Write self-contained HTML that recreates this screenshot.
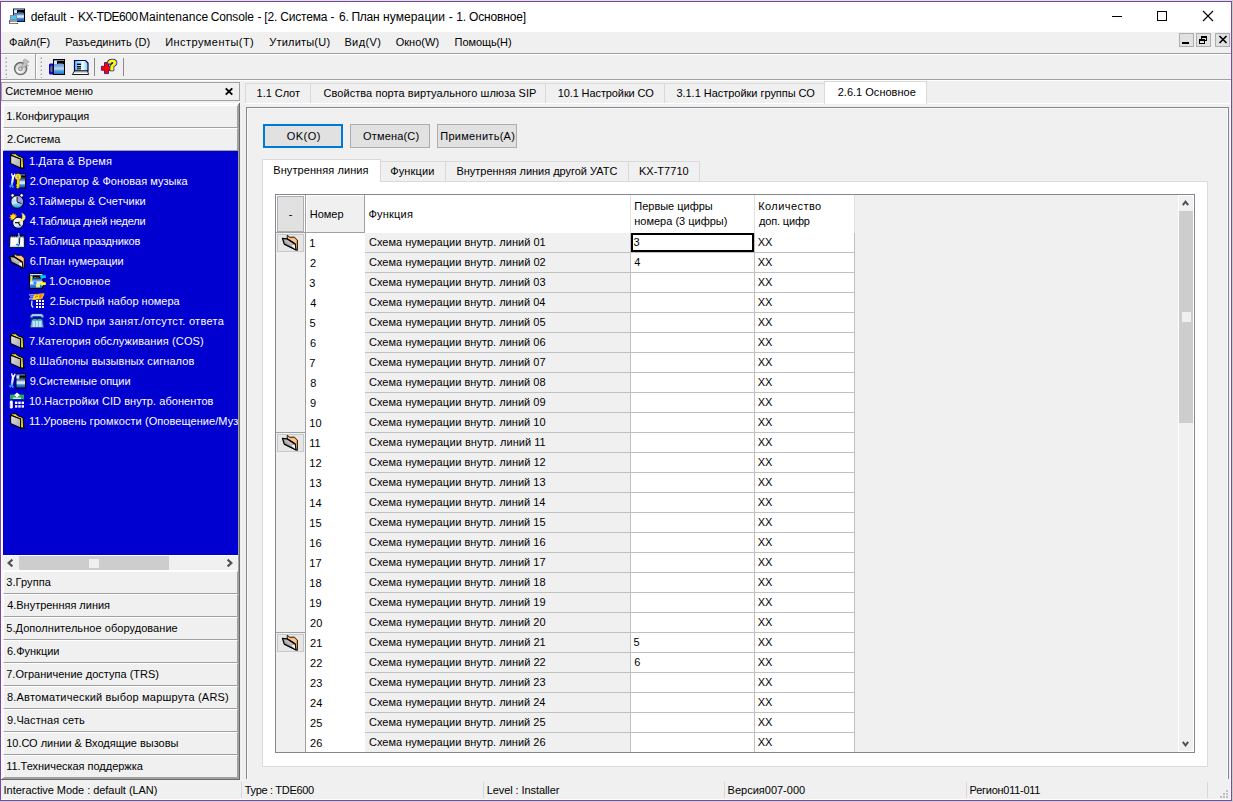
<!DOCTYPE html>
<html lang="ru"><head><meta charset="utf-8"><title>KX-TDE600 Maintenance Console</title>
<style>
html,body{margin:0;padding:0}
body{width:1233px;height:802px;overflow:hidden;background:#d5d8d4;position:relative;font-family:"Liberation Sans", Arial, sans-serif;font-size:11px;line-height:14px;color:#000}
div,span.t,svg{position:absolute;box-sizing:border-box}
span.t{white-space:pre}
svg{overflow:visible}
</style></head>
<body>
<svg width="0" height="0" style="left:0;top:0"><defs><linearGradient id="pbxg" x1="0" y1="0" x2="0" y2="1"><stop offset="0" stop-color="#3a7cc8"/><stop offset="0.42" stop-color="#3a7cc8"/><stop offset="0.56" stop-color="#d4dcfa"/><stop offset="0.68" stop-color="#e6ebff"/><stop offset="0.8" stop-color="#3a8ad8"/><stop offset="1" stop-color="#1560a8"/></linearGradient><linearGradient id="pbxg2" x1="0" y1="0" x2="0" y2="1"><stop offset="0" stop-color="#6098d8"/><stop offset="0.4" stop-color="#7aa8dc"/><stop offset="0.62" stop-color="#c4d6f0"/><stop offset="0.8" stop-color="#4a98e0"/><stop offset="1" stop-color="#2078c8"/></linearGradient><linearGradient id="wrg" x1="0" y1="0" x2="0" y2="1"><stop offset="0" stop-color="#ffffff"/><stop offset="0.6" stop-color="#d8ecff"/><stop offset="1" stop-color="#40a8f0"/></linearGradient><linearGradient id="clk2" x1="0" y1="0" x2="0.3" y2="1"><stop offset="0" stop-color="#ffffff"/><stop offset="0.7" stop-color="#e4f0ff"/><stop offset="1" stop-color="#a8ccf4"/></linearGradient><radialGradient id="discg" cx="0.4" cy="0.7" r="0.7"><stop offset="0" stop-color="#ffffff"/><stop offset="1" stop-color="#c4c4c4"/></radialGradient><linearGradient id="scrg" x1="0" y1="0" x2="1" y2="0"><stop offset="0" stop-color="#48bcf0"/><stop offset="0.62" stop-color="#f0faff"/><stop offset="1" stop-color="#78ccf4"/></linearGradient><linearGradient id="fold" x1="0" y1="0" x2="1" y2="1"><stop offset="0" stop-color="#e4e4e4"/><stop offset="1" stop-color="#a8a8a8"/></linearGradient><linearGradient id="clk" x1="0" y1="0" x2="0" y2="1"><stop offset="0" stop-color="#ffffff"/><stop offset="0.55" stop-color="#a8d8f8"/><stop offset="1" stop-color="#18a0e0"/></linearGradient></defs></svg>
<div style="left:0px;top:1px;width:1232px;height:800px;background:#f0f0f0;border:1px solid #7a46a8"></div>
<div style="left:1px;top:2px;width:1230px;height:30px;background:#fff"></div>
<svg style="left:9px;top:8px" width="17" height="16" viewBox="0 0 17 16" shape-rendering="crispEdges"><rect x="4" y="0" width="12" height="14" fill="#101840"/><rect x="5" y="1" width="10" height="12" fill="url(#pbxg)"/><rect x="5" y="1" width="10" height="1" fill="#6a8cc0"/><rect x="5" y="2" width="3" height="3" fill="#e0e4f8"/><rect x="8" y="2" width="7" height="3" fill="#000"/><rect x="9" y="4" width="3" height="1" fill="#207838"/><rect x="12" y="4" width="2" height="1" fill="#901828"/><rect x="15" y="0" width="1" height="14" fill="#000"/><rect x="4" y="0" width="12" height="1" fill="#8a8a90"/><rect x="1" y="7" width="7" height="5" fill="#8c8c8c"/><rect x="2" y="8" width="5" height="3" fill="#40c8ff"/><rect x="1" y="12" width="7" height="2" fill="#9a9a9a"/><rect x="0" y="14" width="9" height="1" fill="#f4f4f4"/><rect x="0" y="15" width="9" height="1" fill="#808080"/><rect x="0" y="12" width="1" height="3" fill="#5050c0"/><rect x="8" y="15" width="1" height="1" fill="#3030b0"/></svg>
<span id="t0" class="t" style="left:30.64px;top:9px;font-size:12px;line-height:16px;letter-spacing:-0.050px;">default</span>
<span id="t1" class="t" style="left:70.02px;top:9px;font-size:12px;line-height:16px;">-</span>
<span id="t2" class="t" style="left:77.97px;top:9px;font-size:12px;line-height:16px;letter-spacing:-0.481px;">KX-TDE600</span>
<span id="t3" class="t" style="left:139.04px;top:9px;font-size:12px;line-height:16px;letter-spacing:0.036px;">Maintenance</span>
<span id="t4" class="t" style="left:210.86px;top:9px;font-size:12px;line-height:16px;letter-spacing:-0.168px;">Console</span>
<span id="t5" class="t" style="left:257.42px;top:9px;font-size:12px;line-height:16px;">-</span>
<span id="t6" class="t" style="left:264.3px;top:9px;font-size:12px;line-height:16px;letter-spacing:-0.179px;">[2. Система</span>
<span id="t7" class="t" style="left:330.62px;top:9px;font-size:12px;line-height:16px;">-</span>
<span id="t8" class="t" style="left:339px;top:9px;font-size:12px;line-height:16px;letter-spacing:-0.290px;">6. План</span>
<span id="t9" class="t" style="left:382.9px;top:9px;font-size:12px;line-height:16px;letter-spacing:0.125px;">нумерации</span>
<span id="t10" class="t" style="left:448.72px;top:9px;font-size:12px;line-height:16px;">-</span>
<span id="t11" class="t" style="left:456.2px;top:9px;font-size:12px;line-height:16px;letter-spacing:-0.166px;">1. Основное]</span>
<div style="left:1112px;top:16px;width:10px;height:1px;background:#000"></div>
<div style="left:1157px;top:11px;width:10px;height:10px;border:1px solid #000"></div>
<svg style="left:1203px;top:11px" width="10" height="10" viewBox="0 0 10 10"><path d="M0 0 L10 10 M10 0 L0 10" stroke="#000" stroke-width="1.1" fill="none"/></svg>
<span id="t12" class="t" style="left:9.12px;top:35px;">Файл(F)</span>
<span id="t13" class="t" style="left:65.2px;top:35px;letter-spacing:0.037px;">Разъединить (D)</span>
<span id="t14" class="t" style="left:165.19px;top:35px;letter-spacing:0.454px;">Инструменты(T)</span>
<span id="t15" class="t" style="left:269.21px;top:35px;letter-spacing:0.211px;">Утилиты(U)</span>
<span id="t16" class="t" style="left:344.4px;top:35px;letter-spacing:0.378px;">Вид(V)</span>
<span id="t17" class="t" style="left:395.73px;top:35px;letter-spacing:0.015px;">Окно(W)</span>
<span id="t18" class="t" style="left:454.6px;top:35px;letter-spacing:-0.089px;">Помощь(H)</span>
<div style="left:1179px;top:33px;width:15px;height:14px;background:#e1e1e1;border:1px solid #adadad"></div>
<div style="left:1196px;top:33px;width:15px;height:14px;background:#e1e1e1;border:1px solid #adadad"></div>
<div style="left:1215px;top:33px;width:15px;height:14px;background:#e1e1e1;border:1px solid #adadad"></div>
<div style="left:1182px;top:42px;width:7px;height:2px;background:#000"></div>
<div style="left:1201px;top:36px;width:6px;height:5px;border:1px solid #000;border-top-width:2px"></div>
<div style="left:1199px;top:39px;width:6px;height:5px;border:1px solid #000;border-top-width:2px;background:#e1e1e1"></div>
<svg style="left:1219px;top:36px" width="8" height="7" viewBox="0 0 8 7"><path d="M0.5 0 L7.5 7 M7.5 0 L0.5 7" stroke="#000" stroke-width="1.6" fill="none"/></svg>
<div style="left:1px;top:53px;width:1230px;height:1px;background:#a0a0a0"></div>
<div style="left:1px;top:54px;width:1230px;height:1px;background:#fff"></div>
<div style="left:35px;top:54px;width:1px;height:26px;background:#a0a0a0"></div>
<div style="left:36px;top:55px;width:1px;height:24px;background:#fff"></div>
<div style="left:5px;top:57px;width:2px;height:2px;background:linear-gradient(135deg,#e8e8e8 35%,#a8a8a8 65%)"></div>
<div style="left:5px;top:61px;width:2px;height:2px;background:linear-gradient(135deg,#e8e8e8 35%,#a8a8a8 65%)"></div>
<div style="left:5px;top:65px;width:2px;height:2px;background:linear-gradient(135deg,#e8e8e8 35%,#a8a8a8 65%)"></div>
<div style="left:5px;top:69px;width:2px;height:2px;background:linear-gradient(135deg,#e8e8e8 35%,#a8a8a8 65%)"></div>
<div style="left:5px;top:73px;width:2px;height:2px;background:linear-gradient(135deg,#e8e8e8 35%,#a8a8a8 65%)"></div>
<div style="left:5px;top:77px;width:2px;height:1px;background:linear-gradient(135deg,#e8e8e8 35%,#a8a8a8 65%)"></div>
<div style="left:40px;top:57px;width:2px;height:2px;background:linear-gradient(135deg,#e8e8e8 35%,#a8a8a8 65%)"></div>
<div style="left:40px;top:61px;width:2px;height:2px;background:linear-gradient(135deg,#e8e8e8 35%,#a8a8a8 65%)"></div>
<div style="left:40px;top:65px;width:2px;height:2px;background:linear-gradient(135deg,#e8e8e8 35%,#a8a8a8 65%)"></div>
<div style="left:40px;top:69px;width:2px;height:2px;background:linear-gradient(135deg,#e8e8e8 35%,#a8a8a8 65%)"></div>
<div style="left:40px;top:73px;width:2px;height:2px;background:linear-gradient(135deg,#e8e8e8 35%,#a8a8a8 65%)"></div>
<div style="left:40px;top:77px;width:2px;height:1px;background:linear-gradient(135deg,#e8e8e8 35%,#a8a8a8 65%)"></div>
<svg style="left:14px;top:59px" width="16" height="17" viewBox="0 0 16 17"><circle cx="6.6" cy="9.6" r="6" fill="url(#discg)" stroke="#6c6c6c" stroke-width="1.5"/><circle cx="6.4" cy="9.8" r="1.9" fill="#d0d0d0" stroke="#7a7a7a" stroke-width="0.9"/><path d="M7 9 L10 3 L9 1.2 L11.5 0.2 L13 1.5 L15 2.6 L13.6 4 L12 5 L14.6 6.6 L12 6.8 L11 8 Z" fill="#c2c2c2" stroke="#8c8c8c" stroke-width="0.6"/></svg>
<svg style="left:49px;top:59px" width="17" height="16" viewBox="0 0 17 16"><rect x="0" y="4.5" width="5" height="11" rx="1.5" fill="#0000e0"/><ellipse cx="2.3" cy="10" rx="1.2" ry="3.6" fill="#7078a0" stroke="#303060" stroke-width="0.6"/><rect x="4" y="0" width="12" height="16" fill="#000"/><rect x="5" y="1" width="10" height="14" fill="url(#pbxg2)"/><rect x="5" y="1" width="10" height="1" fill="#6a8cc0"/><rect x="5" y="2" width="3" height="3" fill="#e0e4f8"/><rect x="8" y="2" width="7" height="3" fill="#000"/><rect x="9" y="4" width="3" height="1" fill="#207838"/><rect x="12" y="4" width="2" height="1" fill="#901828"/></svg>
<svg style="left:72px;top:59px" width="17" height="16" viewBox="0 0 17 16"><path d="M2.5 1.5 L13.5 1.5 L16 4 L16 12 L2.5 12 Z" fill="url(#scrg)" stroke="#000060" stroke-width="1.2"/><rect x="5" y="4.6" width="4" height="1.4" fill="#000"/><rect x="5" y="7" width="4" height="1.4" fill="#000"/><rect x="5" y="9.2" width="4" height="1.2" fill="#102030"/><path d="M2.5 12 L15.5 12 L16.6 15.5 L0.4 15.5 Z" fill="#fff" stroke="#000" stroke-width="0.9"/><rect x="3" y="12" width="12" height="1.4" fill="#909090"/></svg>
<div style="left:94px;top:58px;width:1px;height:18px;background:#8a8a8a"></div>
<svg style="left:101px;top:59px" width="17" height="16" viewBox="0 0 17 16"><path d="M3.5 3.5 L7.5 3.5 L7.5 7.3 L9.6 7.3 L9.6 11.3 L7.5 11.3 L7.5 14.6 L3.5 14.6 L3.5 11.3 L0.4 11.3 L0.4 7.3 L3.5 7.3 Z" fill="#ff0000" stroke="#000080" stroke-width="0.7"/><text x="6.6" y="11" font-family="Liberation Sans, Arial, sans-serif" font-weight="bold" font-size="15" fill="#000080" stroke="#000080" stroke-width="2.6" stroke-linejoin="round">?</text><text x="6.6" y="11" font-family="Liberation Sans, Arial, sans-serif" font-weight="bold" font-size="15" fill="#ffff00" stroke="#ffff00" stroke-width="0.9">?</text></svg>
<div style="left:123px;top:58px;width:1px;height:18px;background:#8a8a8a"></div>
<div style="left:1px;top:79px;width:1230px;height:1px;background:#a0a0a0"></div>
<div style="left:1px;top:80px;width:1230px;height:1px;background:#fff"></div>
<div style="left:1px;top:82px;width:239px;height:19px;border:1px solid #a0a0a0"></div>
<span id="t19" class="t" style="left:5.2px;top:84px;letter-spacing:0.029px;">Системное меню</span>
<svg style="left:225px;top:88px" width="8" height="7" viewBox="0 0 8 7"><path d="M0.7 0.4 L7.3 6.6 M7.3 0.4 L0.7 6.6" stroke="#000" stroke-width="1.9" fill="none"/></svg>
<div style="left:238px;top:104px;width:1px;height:675px;background:#a0a0a0"></div>
<div style="left:239px;top:103px;width:1px;height:677px;background:#696969"></div>
<div style="left:2px;top:778px;width:237px;height:1px;background:#a0a0a0"></div>
<div style="left:1px;top:779px;width:239px;height:1px;background:#696969"></div>
<div style="left:1px;top:103px;width:237px;height:1px;background:#fff"></div>
<div style="left:2px;top:104px;width:236px;height:1px;background:#f6f6f6"></div>
<div style="left:1px;top:103px;width:1px;height:676px;background:#fff"></div>
<div style="left:2px;top:104px;width:1px;height:674px;background:#f6f6f6"></div>
<div style="left:3px;top:105px;width:235px;height:23px;background:#f0f0f0;border-top:1px solid #fff;border-left:1px solid #fff;border-bottom:1px solid #a0a0a0;border-right:1px solid #a0a0a0"></div>
<span id="t20" class="t" style="left:6.2px;top:109px;letter-spacing:0.008px;">1.Конфигурация</span>
<div style="left:3px;top:128px;width:235px;height:23px;background:#f0f0f0;border-top:1px solid #fff;border-left:1px solid #fff;border-bottom:1px solid #a0a0a0;border-right:1px solid #a0a0a0"></div>
<span id="t21" class="t" style="left:7.02px;top:132px;">2.Система</span>
<div style="left:3px;top:151px;width:235px;height:404px;background:#0000d0"></div>
<div style="left:3px;top:151px;width:235px;height:404px;overflow:hidden">
<svg style="left:7px;top:2px" width="15" height="16" viewBox="0 0 15 16"><path d="M2 0.8 L5.5 0.8 L7.5 2.6 L13 4.8 L13.6 15 L10.5 15 L10 6 L1 2 Z" fill="#f2e238" stroke="#000" stroke-width="1"/><path d="M0.6 2.2 L10.6 6 L10.6 15 L0.6 10.4 Z" fill="url(#fold)" stroke="#000" stroke-width="1.1"/><path d="M11 15.3 L14.5 15.3 L14.5 14.2" stroke="#000" stroke-width="1" fill="none"/></svg>
<span id="t22" class="t" style="left:25.9px;top:3px;color:#fff;letter-spacing:0.238px;">1.Дата &amp; Время</span>
<svg style="left:6px;top:22px" width="17" height="16" viewBox="0 0 17 16"><rect x="7" y="0.5" width="10" height="15" fill="#000"/><rect x="8" y="1.5" width="8" height="13" fill="url(#pbxg)"/><rect x="8" y="1.5" width="8" height="1" fill="#6a8cc0"/><rect x="8" y="2.5" width="3" height="3" fill="#e0e4f8"/><rect x="11" y="2.5" width="5" height="3" fill="#000"/><rect x="12" y="4.5" width="3" height="1" fill="#207838"/><rect x="15" y="4.5" width="2" height="1" fill="#901828"/><path d="M4.3 2.6 L2.7 12.4" stroke="url(#wrg)" stroke-width="2.3" fill="none"/><path d="M2.6 0.3 L3.1 2.8 L5.3 3 L6.1 0.7" stroke="#ffffff" stroke-width="1.3" fill="none"/><path d="M0.7 12.2 L1.5 14.6 M4.2 12.6 L3.6 15 M1 13 L4 13" stroke="#2ea0f0" stroke-width="1.3" fill="none"/><circle cx="9" cy="3.8" r="2" fill="none" stroke="#a08000" stroke-width="2.4"/><circle cx="9" cy="3.8" r="2" fill="none" stroke="#f8e428" stroke-width="1.6"/><path d="M8 6 L10.2 6 L10.2 14.4 L8.8 15.4 L7 14.4 L8 13.4 L7 12.2 L8 11 Z" fill="#f8e428" stroke="#a08000" stroke-width="0.5"/></svg>
<span id="t23" class="t" style="left:26.72px;top:23px;color:#fff;letter-spacing:0.028px;">2.Оператор &amp; Фоновая музыка</span>
<svg style="left:7px;top:42px" width="15" height="16" viewBox="0 0 15 16"><circle cx="2.6" cy="2.4" r="1.7" fill="#fff" stroke="#000" stroke-width="0.6"/><circle cx="11.6" cy="2.4" r="1.7" fill="#fff" stroke="#000" stroke-width="0.6"/><circle cx="7.1" cy="9" r="6.3" fill="url(#clk)" stroke="#000" stroke-width="1"/><path d="M7.1 9 L7.1 3.2 A5.8 5.8 0 0 1 12.6 11 Z" fill="#9c9ce0"/><path d="M7.1 3.6 L7.1 9 L11.6 10.6" stroke="#000" stroke-width="0.9" fill="none"/><path d="M7.1 9 L2.2 10.8" stroke="#fff" stroke-width="0.8"/></svg>
<span id="t24" class="t" style="left:25.92px;top:43px;color:#fff;letter-spacing:0.042px;">3.Таймеры &amp; Счетчики</span>
<svg style="left:6px;top:62px" width="16" height="16" viewBox="0 0 16 16"><path d="M4.2 -0.2 L5 1.6 L6.8 0.6 L6.6 2.4 L8.4 2.6 L7 4 L4 8.2 L3.2 6.4 L1.2 7.4 L1.8 5.4 L0 4.6 L1.6 3.6 L0.6 1.8 L2.6 2 Z" fill="#ff8a10"/><circle cx="4.3" cy="4" r="2.3" fill="#ffe818"/><circle cx="9.2" cy="9.8" r="5.5" fill="url(#clk2)" stroke="#000" stroke-width="1"/><path d="M6 9.6 L9.4 9.8 L11.4 13 M9.4 9.8 L10.6 8.6" stroke="#000" stroke-width="1.1" fill="none"/><path d="M12.8 0.2 C18 2 17.4 8.4 10.2 8.8 C13.4 6.6 14.4 3.6 12.8 0.2 Z" fill="#fff078" stroke="#f4dc40" stroke-width="0.6"/></svg>
<span id="t25" class="t" style="left:26.87px;top:63px;color:#fff;letter-spacing:-0.208px;">4.Таблица дней недели</span>
<svg style="left:6px;top:82px" width="16" height="16" viewBox="0 0 16 16"><path d="M1 3 L2 2.2 L3 3.4 L4 2.2 L5 3.4 L6 2.2 L7 3.4 L8 2.2 L9 3.4 L10.6 2.2 L12 3.4 L13.2 2.2 L15.2 3 L15.4 14.6 L0.6 14.6 Z" fill="#fff" stroke="#000" stroke-width="0.9"/><path d="M1.6 1.8 L2 4.4 M3.6 1.8 L4 4.4 M5.6 1.8 L6 4.4 M7.6 2 L8 4.4 M12 1.8 L12.2 4.4 M14 1.8 L14 4.4" stroke="#000" stroke-width="1.1"/><rect x="1.2" y="12.6" width="13.6" height="1.4" fill="#b8d8f4"/><path d="M9.6 0 L10 3.4 L9.6 10" stroke="#7ab8f0" stroke-width="1.4" fill="none"/><path d="M10.8 4.4 L10.4 11.6" stroke="#000" stroke-width="0.9"/><path d="M6.6 11.6 L8 10.4 L9.8 11 L10.4 12.8 L8.6 14 L9 12.6 L7.4 12.2 Z" fill="#2080e0"/></svg>
<span id="t26" class="t" style="left:25.98px;top:83px;color:#fff;letter-spacing:-0.120px;">5.Таблица праздников</span>
<svg style="left:6px;top:102px" width="16" height="16" viewBox="0 0 16 16"><path d="M5.2 0.4 L7.8 2.2 L12.4 2.2 L15.4 5.1 L15.4 15.4 L13.8 14.8 L13.2 8.6 L5.2 3.9 Z" fill="#ffaa55" stroke="#000" stroke-width="0.9" stroke-linejoin="round"/><path d="M6 1.8 L8 3.4 L11.8 3.4 L14 5.6 L14 9 L12 6.4 L6.4 3.4 Z" fill="#ffc890"/><path d="M0.5 3.4 L5.2 3.9 L13.2 9.1 L13.8 14.8 L2.3 9.1 Z" fill="#a9a9a9" stroke="#000" stroke-width="1.3" stroke-linejoin="round"/><path d="M2.4 5 L6 5.4 L11 9 L8 9.6 Z" fill="#c4c4c4"/><path d="M9.4 10.4 L12.8 9.6 L13.2 14 Z" fill="#fff"/></svg>
<span id="t27" class="t" style="left:26.71px;top:103px;color:#fff;letter-spacing:-0.044px;">6.План нумерации</span>
<svg style="left:26px;top:122px" width="17" height="16" viewBox="0 0 17 16"><rect x="0" y="0" width="14" height="16" fill="#000"/><rect x="1" y="1" width="12" height="14" fill="url(#pbxg)"/><rect x="1" y="1" width="12" height="1" fill="#dfe8ff"/><rect x="4" y="2.5" width="8" height="3" fill="#000"/><rect x="5" y="4" width="2.4" height="1" fill="#2a9a3a"/><rect x="8" y="4" width="2" height="1" fill="#b01020"/><rect x="1.5" y="3" width="1.6" height="6" fill="#f8e820"/><rect x="4.5" y="8.5" width="3" height="3" fill="#2090ff"/><rect x="7" y="11" width="4" height="3.4" fill="#e8f080"/><path d="M10.6 3.6 L13.8 0.6 L13.8 2.2 L16.8 2.2 L16.8 5 L13.8 5 L13.8 6.6 Z" fill="#00c8f0"/><path d="M10.6 10.6 L13.8 7.6 L13.8 9.2 L16.8 9.2 L16.8 12 L13.8 12 L13.8 13.6 Z" fill="#ffff00"/></svg>
<span id="t28" class="t" style="left:45.9px;top:123px;color:#fff;letter-spacing:0.200px;">1.Основное</span>
<svg style="left:26px;top:142px" width="16" height="16" viewBox="0 0 16 16"><path d="M5.5 1 L15.5 0.4 L13 6 L3.4 7 Z" fill="#ffd820"/><path d="M11 0.8 L15.5 0.4 L13 6 L10 6.2 Z" fill="#ffa010"/><path d="M6.5 2 L9.5 1.6 M6 4 L9 3.6 M10.4 2.2 L12.4 2 M10 4 L12 3.8" stroke="#a07000" stroke-width="0.8"/><rect x="0" y="1.4" width="5" height="1" fill="#e8eeff"/><rect x="1" y="3.4" width="4" height="1" fill="#c8d8ff"/><rect x="0" y="5.4" width="4" height="1" fill="#e8eeff"/><path d="M3 7.6 L2.6 12 L4 14.6" stroke="#d8ecff" stroke-width="1.3" fill="none"/><rect x="7" y="7" width="2" height="2" fill="#fff"/><rect x="10" y="7" width="2" height="2" fill="#fff"/><rect x="13" y="7" width="2" height="2" fill="#fff"/><rect x="7" y="10" width="2" height="2" fill="#fff"/><rect x="10" y="10" width="2" height="2" fill="#fff"/><rect x="13" y="10" width="2" height="2" fill="#fff"/><rect x="7" y="13" width="2" height="2" fill="#fff"/><rect x="10" y="13" width="2" height="2" fill="#fff"/><rect x="13" y="13" width="2" height="2" fill="#fff"/></svg>
<span id="t29" class="t" style="left:46.72px;top:143px;color:#fff;">2.Быстрый набор номера</span>
<svg style="left:26px;top:162px" width="16" height="16" viewBox="0 0 16 16"><path d="M1 4.4 Q1 1 4 1 L12 1 Q15 1 15 4.4 L12.6 5 L12 3.4 L4 3.4 L3.4 5 Z" fill="#80c0ff" stroke="#204880" stroke-width="0.8"/><path d="M3 2 L13 2" stroke="#e8f4ff" stroke-width="1"/><path d="M2.6 6.4 L13.4 6.4 L14.6 14.6 L1.4 14.6 Z" fill="#70b0f0" stroke="#204880" stroke-width="0.8"/><rect x="4" y="6" width="3.4" height="1.6" fill="#20c848"/><rect x="8.6" y="6" width="3.4" height="1.6" fill="#20c848"/><rect x="3.6" y="8.4" width="2.4" height="1.3" fill="#f4f8ff"/><rect x="6.8" y="8.4" width="2.4" height="1.3" fill="#f4f8ff"/><rect x="10" y="8.4" width="2.4" height="1.3" fill="#f4f8ff"/><rect x="3.6" y="10.4" width="2.4" height="1.3" fill="#f4f8ff"/><rect x="6.8" y="10.4" width="2.4" height="1.3" fill="#f4f8ff"/><rect x="10" y="10.4" width="2.4" height="1.3" fill="#f4f8ff"/><rect x="3.6" y="12.4" width="2.4" height="1.3" fill="#f4f8ff"/><rect x="6.8" y="12.4" width="2.4" height="1.3" fill="#f4f8ff"/><rect x="10" y="12.4" width="2.4" height="1.3" fill="#f4f8ff"/></svg>
<span id="t30" class="t" style="left:45.92px;top:163px;color:#fff;letter-spacing:0.285px;">3.DND при занят./отсутст. ответа</span>
<svg style="left:7px;top:182px" width="15" height="16" viewBox="0 0 15 16"><path d="M2 0.8 L5.5 0.8 L7.5 2.6 L13 4.8 L13.6 15 L10.5 15 L10 6 L1 2 Z" fill="#f2e238" stroke="#000" stroke-width="1"/><path d="M0.6 2.2 L10.6 6 L10.6 15 L0.6 10.4 Z" fill="url(#fold)" stroke="#000" stroke-width="1.1"/><path d="M11 15.3 L14.5 15.3 L14.5 14.2" stroke="#000" stroke-width="1" fill="none"/></svg>
<span id="t31" class="t" style="left:25.92px;top:183px;color:#fff;letter-spacing:0.124px;">7.Категория обслуживания (COS)</span>
<svg style="left:7px;top:202px" width="15" height="16" viewBox="0 0 15 16"><path d="M2 0.8 L5.5 0.8 L7.5 2.6 L13 4.8 L13.6 15 L10.5 15 L10 6 L1 2 Z" fill="#f2e238" stroke="#000" stroke-width="1"/><path d="M0.6 2.2 L10.6 6 L10.6 15 L0.6 10.4 Z" fill="url(#fold)" stroke="#000" stroke-width="1.1"/><path d="M11 15.3 L14.5 15.3 L14.5 14.2" stroke="#000" stroke-width="1" fill="none"/></svg>
<span id="t32" class="t" style="left:26.73px;top:203px;color:#fff;letter-spacing:0.087px;">8.Шаблоны вызывных сигналов</span>
<svg style="left:6px;top:222px" width="17" height="16" viewBox="0 0 17 16"><rect x="6.5" y="0.5" width="10.5" height="15" fill="#000"/><rect x="7.5" y="1.5" width="8.5" height="13" fill="url(#pbxg)"/><rect x="7.5" y="1.5" width="8.5" height="1" fill="#6a8cc0"/><rect x="7.5" y="2.5" width="3" height="3" fill="#e0e4f8"/><rect x="10.5" y="2.5" width="5.5" height="3" fill="#000"/><rect x="11.5" y="4.5" width="3" height="1" fill="#207838"/><rect x="14.5" y="4.5" width="2" height="1" fill="#901828"/><path d="M4.3 2.6 L2.7 12.4" stroke="url(#wrg)" stroke-width="2.3" fill="none"/><path d="M2.6 0.3 L3.1 2.8 L5.3 3 L6.1 0.7" stroke="#ffffff" stroke-width="1.3" fill="none"/><path d="M0.7 12.2 L1.5 14.6 M4.2 12.6 L3.6 15 M1 13 L4 13" stroke="#2ea0f0" stroke-width="1.3" fill="none"/></svg>
<span id="t33" class="t" style="left:26.72px;top:223px;color:#fff;letter-spacing:-0.017px;">9.Системные опции</span>
<svg style="left:6px;top:242px" width="16" height="16" viewBox="0 0 16 16"><rect x="1" y="1.6" width="14" height="4.6" fill="#20b050"/><path d="M4.6 2.6 L8 -0.4 L11.4 2.6 L10 2.6 L8 4.8 L6 2.6 Z" fill="#fff"/><rect x="4" y="4.6" width="8" height="1.2" fill="#f0fff4"/><rect x="0.8" y="7.6" width="3" height="8" rx="1.4" fill="#fff"/><rect x="1.2" y="10" width="0.9" height="4" fill="#b8d0f0"/><rect x="6" y="8.6" width="2.4" height="2.4" fill="#fff"/><rect x="9.3" y="8.6" width="2.4" height="2.4" fill="#fff"/><rect x="12.6" y="8.6" width="2.4" height="2.4" fill="#fff"/><rect x="6" y="12.2" width="2.4" height="2.4" fill="#fff"/><rect x="9.3" y="12.2" width="2.4" height="2.4" fill="#fff"/><rect x="12.6" y="12.2" width="2.4" height="2.4" fill="#fff"/></svg>
<span id="t34" class="t" style="left:25.9px;top:243px;color:#fff;letter-spacing:0.058px;">10.Настройки CID внутр. абонентов</span>
<svg style="left:7px;top:262px" width="15" height="16" viewBox="0 0 15 16"><path d="M2 0.8 L5.5 0.8 L7.5 2.6 L13 4.8 L13.6 15 L10.5 15 L10 6 L1 2 Z" fill="#f2e238" stroke="#000" stroke-width="1"/><path d="M0.6 2.2 L10.6 6 L10.6 15 L0.6 10.4 Z" fill="url(#fold)" stroke="#000" stroke-width="1.1"/><path d="M11 15.3 L14.5 15.3 L14.5 14.2" stroke="#000" stroke-width="1" fill="none"/></svg>
<span id="t35" class="t" style="left:25.9px;top:263px;color:#fff;letter-spacing:0.072px;">11.Уровень громкости (Оповещение/Музыка)</span>
</div>
<div style="left:3px;top:555px;width:235px;height:16px;background:#f0f0f0"></div>
<div style="left:3px;top:555px;width:235px;height:1px;background:#fff"></div>
<div style="left:3px;top:570px;width:235px;height:1px;background:#fff"></div>
<div style="left:19px;top:556px;width:150px;height:14px;background:#cdcdcd"></div>
<div style="left:89px;top:559px;width:10px;height:9px;background:#f0f0f0"></div>
<svg style="left:7px;top:559px" width="6" height="8" viewBox="0 0 6 8"><path d="M5.4 0.6 L1.6 4 L5.4 7.4" stroke="#505050" stroke-width="2.1" fill="none"/></svg>
<svg style="left:227px;top:559px" width="6" height="8" viewBox="0 0 6 8"><path d="M0.6 0.6 L4.4 4 L0.6 7.4" stroke="#505050" stroke-width="2.1" fill="none"/></svg>
<div style="left:3px;top:571px;width:235px;height:23px;background:#f0f0f0;border-top:1px solid #fff;border-left:1px solid #fff;border-bottom:1px solid #a0a0a0;border-right:1px solid #a0a0a0"></div>
<span id="t36" class="t" style="left:6.22px;top:575px;letter-spacing:0.093px;">3.Группа</span>
<div style="left:3px;top:594px;width:235px;height:23px;background:#f0f0f0;border-top:1px solid #fff;border-left:1px solid #fff;border-bottom:1px solid #a0a0a0;border-right:1px solid #a0a0a0"></div>
<span id="t37" class="t" style="left:7.17px;top:598px;letter-spacing:-0.021px;">4.Внутренняя линия</span>
<div style="left:3px;top:617px;width:235px;height:23px;background:#f0f0f0;border-top:1px solid #fff;border-left:1px solid #fff;border-bottom:1px solid #a0a0a0;border-right:1px solid #a0a0a0"></div>
<span id="t38" class="t" style="left:6.28px;top:621px;letter-spacing:0.056px;">5.Дополнительное оборудование</span>
<div style="left:3px;top:640px;width:235px;height:23px;background:#f0f0f0;border-top:1px solid #fff;border-left:1px solid #fff;border-bottom:1px solid #a0a0a0;border-right:1px solid #a0a0a0"></div>
<span id="t39" class="t" style="left:7.01px;top:644px;">6.Функции</span>
<div style="left:3px;top:663px;width:235px;height:23px;background:#f0f0f0;border-top:1px solid #fff;border-left:1px solid #fff;border-bottom:1px solid #a0a0a0;border-right:1px solid #a0a0a0"></div>
<span id="t40" class="t" style="left:6.22px;top:667px;letter-spacing:0.007px;">7.Ограничение доступа (TRS)</span>
<div style="left:3px;top:686px;width:235px;height:23px;background:#f0f0f0;border-top:1px solid #fff;border-left:1px solid #fff;border-bottom:1px solid #a0a0a0;border-right:1px solid #a0a0a0"></div>
<span id="t41" class="t" style="left:7.03px;top:690px;letter-spacing:0.193px;">8.Автоматический выбор маршрута (ARS)</span>
<div style="left:3px;top:709px;width:235px;height:23px;background:#f0f0f0;border-top:1px solid #fff;border-left:1px solid #fff;border-bottom:1px solid #a0a0a0;border-right:1px solid #a0a0a0"></div>
<span id="t42" class="t" style="left:7.02px;top:713px;letter-spacing:0.111px;">9.Частная сеть</span>
<div style="left:3px;top:732px;width:235px;height:23px;background:#f0f0f0;border-top:1px solid #fff;border-left:1px solid #fff;border-bottom:1px solid #a0a0a0;border-right:1px solid #a0a0a0"></div>
<span id="t43" class="t" style="left:6.2px;top:736px;letter-spacing:-0.018px;">10.СО линии &amp; Входящие вызовы</span>
<div style="left:3px;top:755px;width:235px;height:23px;background:#f0f0f0;border-top:1px solid #fff;border-left:1px solid #fff;border-bottom:1px solid #a0a0a0;border-right:1px solid #a0a0a0"></div>
<span id="t44" class="t" style="left:6.2px;top:759px;letter-spacing:-0.023px;">11.Техническая поддержка</span>
<div style="left:245px;top:103px;width:986px;height:1px;background:#fff"></div>
<div style="left:245px;top:83px;width:66px;height:20px;border:1px solid #d9d9d9;border-bottom:none"></div>
<span id="t45" class="t" style="left:256.6px;top:86px;letter-spacing:-0.051px;">1.1 Слот</span>
<div style="left:310px;top:83px;width:236px;height:20px;border:1px solid #d9d9d9;border-bottom:none"></div>
<span id="t46" class="t" style="left:323.45px;top:86px;letter-spacing:0.066px;">Свойства порта виртуального шлюза SIP</span>
<div style="left:545px;top:83px;width:120px;height:20px;border:1px solid #d9d9d9;border-bottom:none"></div>
<span id="t47" class="t" style="left:557.65px;top:86px;letter-spacing:-0.099px;">10.1 Настройки СО</span>
<div style="left:664px;top:83px;width:161px;height:20px;border:1px solid #d9d9d9;border-bottom:none"></div>
<span id="t48" class="t" style="left:676.42px;top:86px;letter-spacing:-0.030px;">3.1.1 Настройки группы СО</span>
<div style="left:824px;top:81px;width:103px;height:23px;background:#fff;border:1px solid #d9d9d9;border-bottom:none"></div>
<span id="t49" class="t" style="left:837.72px;top:85px;letter-spacing:0.011px;">2.6.1 Основное</span>
<div style="left:246px;top:107px;width:983px;height:672px;border:1px solid #828790;border-bottom:none"></div>
<div style="left:247px;top:108px;width:981px;height:671px;border:1px solid #f9f9f9;border-bottom:none"></div>
<div style="left:263px;top:124px;width:80px;height:24px;background:#e1e1e1;border:2px solid #0078d7"></div>
<span id="t50" class="t" style="left:286.73px;top:128.5px;letter-spacing:0.465px;">OK(O)</span>
<div style="left:350px;top:124px;width:80px;height:24px;background:#e1e1e1;border:1px solid #adadad"></div>
<span id="t51" class="t" style="left:362.98px;top:128.5px;letter-spacing:0.170px;">Отмена(C)</span>
<div style="left:437px;top:124px;width:80px;height:24px;background:#e1e1e1;border:1px solid #adadad"></div>
<span id="t52" class="t" style="left:440.25px;top:128.5px;letter-spacing:0.284px;">Применить(A)</span>
<div style="left:262px;top:181px;width:946px;height:586px;background:#fff;border:1px solid #dcdcdc"></div>
<div style="left:380px;top:161px;width:66px;height:21px;border:1px solid #d9d9d9;"></div>
<span id="t53" class="t" style="left:390.22px;top:164px;letter-spacing:0.133px;">Функции</span>
<div style="left:445px;top:161px;width:184px;height:21px;border:1px solid #d9d9d9;"></div>
<span id="t54" class="t" style="left:456.5px;top:164px;letter-spacing:-0.024px;">Внутренняя линия другой УАТС</span>
<div style="left:628px;top:161px;width:72px;height:21px;border:1px solid #d9d9d9;"></div>
<span id="t55" class="t" style="left:638.99px;top:164px;letter-spacing:0.017px;">KX-T7710</span>
<div style="left:262px;top:159px;width:119px;height:23px;background:#fff;border:1px solid #d9d9d9;border-bottom:none"></div>
<span id="t56" class="t" style="left:273.3px;top:163px;letter-spacing:0.080px;">Внутренняя линия</span>
<div style="left:275px;top:194px;width:920px;height:559px;background:#f0f0f0;border:1px solid #828790"></div>
<div style="left:276px;top:195px;width:30px;height:38px;background:#fff"></div>
<div style="left:277px;top:196px;width:27px;height:36px;background:#e1e1e1;border:1px solid #adadad"></div>
<span id="t57" class="t" style="left:288.72px;top:207px;">-</span>
<div style="left:276px;top:232px;width:89px;height:1px;background:#a0a0a0"></div>
<div style="left:276px;top:233px;width:29px;height:519px;background:#f0f0f0"></div>
<div style="left:305px;top:195px;width:1px;height:557px;background:#a0a0a0"></div>
<div style="left:306px;top:195px;width:59px;height:38px;background:#fff"></div>
<div style="left:307px;top:196px;width:57px;height:36px;background:#f0f0f0"></div>
<div style="left:364px;top:195px;width:1px;height:38px;background:#a0a0a0"></div>
<div style="left:306px;top:232px;width:59px;height:1px;background:#a0a0a0"></div>
<span id="t58" class="t" style="left:309.8px;top:207px;letter-spacing:-0.035px;">Номер</span>
<div style="left:306px;top:233px;width:59px;height:519px;background:#fff"></div>
<div style="left:365px;top:195px;width:490px;height:38px;background:#fff"></div>
<span id="t59" class="t" style="left:368.42px;top:207px;letter-spacing:0.217px;">Функция</span>
<div style="left:630px;top:195px;width:1px;height:38px;background:#e0e0e0"></div>
<div style="left:754px;top:195px;width:1px;height:38px;background:#e0e0e0"></div>
<div style="left:854px;top:195px;width:1px;height:38px;background:#e0e0e0"></div>
<span id="t60" class="t" style="left:634.3px;top:199px;letter-spacing:-0.018px;">Первые цифры</span>
<span id="t61" class="t" style="left:634.26px;top:214px;">номера (3 цифры)</span>
<span id="t62" class="t" style="left:758.19px;top:199px;letter-spacing:0.440px;">Количество</span>
<span id="t63" class="t" style="left:759.07px;top:214px;letter-spacing:-0.176px;">доп. цифр</span>
<div style="left:365px;top:233px;width:266px;height:519px;background:#f0f0f0"></div>
<div style="left:631px;top:233px;width:224px;height:519px;background:#fff"></div>
<div style="left:630px;top:233px;width:1px;height:519px;background:#c0c0c0"></div>
<div style="left:754px;top:233px;width:1px;height:519px;background:#c0c0c0"></div>
<div style="left:854px;top:233px;width:1px;height:519px;background:#c0c0c0"></div>
<div style="left:365px;top:252px;width:490px;height:1px;background:#c0c0c0"></div>
<span id="t64" class="t" style="left:309.3px;top:236px;">1</span>
<span id="t65" class="t" style="left:369px;top:235px;letter-spacing:0.018px;">Схема нумерации внутр. линий 01</span>
<span id="t66" class="t" style="left:633.42px;top:235px;">3</span>
<span id="t67" class="t" style="left:757.71px;top:235px;">XX</span>
<div style="left:277px;top:234px;width:27px;height:18px;background:#e6e6e6;border:1px solid #c8c8c8"></div>
<svg style="left:282px;top:235px" width="16" height="16" viewBox="0 0 16 16"><path d="M5.2 0.4 L7.8 2.2 L12.4 2.2 L15.4 5.1 L15.4 15.4 L13.8 14.8 L13.2 8.6 L5.2 3.9 Z" fill="#ffaa55" stroke="#000" stroke-width="0.9" stroke-linejoin="round"/><path d="M6 1.8 L8 3.4 L11.8 3.4 L14 5.6 L14 9 L12 6.4 L6.4 3.4 Z" fill="#ffc890"/><path d="M0.5 3.4 L5.2 3.9 L13.2 9.1 L13.8 14.8 L2.3 9.1 Z" fill="#a9a9a9" stroke="#000" stroke-width="1.3" stroke-linejoin="round"/><path d="M2.4 5 L6 5.4 L11 9 L8 9.6 Z" fill="#c4c4c4"/><path d="M9.4 10.4 L12.8 9.6 L13.2 14 Z" fill="#fff"/></svg>
<div style="left:365px;top:272px;width:490px;height:1px;background:#c0c0c0"></div>
<span id="t68" class="t" style="left:310.12px;top:256px;">2</span>
<span id="t69" class="t" style="left:369px;top:255px;letter-spacing:0.018px;">Схема нумерации внутр. линий 02</span>
<span id="t70" class="t" style="left:634.37px;top:255px;">4</span>
<span id="t71" class="t" style="left:757.71px;top:255px;">XX</span>
<div style="left:365px;top:292px;width:490px;height:1px;background:#c0c0c0"></div>
<span id="t72" class="t" style="left:309.32px;top:276px;">3</span>
<span id="t73" class="t" style="left:369px;top:275px;letter-spacing:0.015px;">Схема нумерации внутр. линий 03</span>
<span id="t74" class="t" style="left:757.71px;top:275px;">XX</span>
<div style="left:365px;top:312px;width:490px;height:1px;background:#c0c0c0"></div>
<span id="t75" class="t" style="left:310.27px;top:296px;">4</span>
<span id="t76" class="t" style="left:369px;top:295px;letter-spacing:0.011px;">Схема нумерации внутр. линий 04</span>
<span id="t77" class="t" style="left:757.71px;top:295px;">XX</span>
<div style="left:365px;top:332px;width:490px;height:1px;background:#c0c0c0"></div>
<span id="t78" class="t" style="left:309.38px;top:316px;">5</span>
<span id="t79" class="t" style="left:369px;top:315px;letter-spacing:0.015px;">Схема нумерации внутр. линий 05</span>
<span id="t80" class="t" style="left:757.71px;top:315px;">XX</span>
<div style="left:365px;top:352px;width:490px;height:1px;background:#c0c0c0"></div>
<span id="t81" class="t" style="left:310.11px;top:336px;">6</span>
<span id="t82" class="t" style="left:369px;top:335px;letter-spacing:0.015px;">Схема нумерации внутр. линий 06</span>
<span id="t83" class="t" style="left:757.71px;top:335px;">XX</span>
<div style="left:365px;top:372px;width:490px;height:1px;background:#c0c0c0"></div>
<span id="t84" class="t" style="left:309.32px;top:356px;">7</span>
<span id="t85" class="t" style="left:369px;top:355px;letter-spacing:0.015px;">Схема нумерации внутр. линий 07</span>
<span id="t86" class="t" style="left:757.71px;top:355px;">XX</span>
<div style="left:365px;top:392px;width:490px;height:1px;background:#c0c0c0"></div>
<span id="t87" class="t" style="left:310.13px;top:376px;">8</span>
<span id="t88" class="t" style="left:369px;top:375px;letter-spacing:0.015px;">Схема нумерации внутр. линий 08</span>
<span id="t89" class="t" style="left:757.71px;top:375px;">XX</span>
<div style="left:365px;top:412px;width:490px;height:1px;background:#c0c0c0"></div>
<span id="t90" class="t" style="left:310.12px;top:396px;">9</span>
<span id="t91" class="t" style="left:369px;top:395px;letter-spacing:0.015px;">Схема нумерации внутр. линий 09</span>
<span id="t92" class="t" style="left:757.71px;top:395px;">XX</span>
<div style="left:365px;top:432px;width:490px;height:1px;background:#c0c0c0"></div>
<span id="t93" class="t" style="left:309.3px;top:416px;">10</span>
<span id="t94" class="t" style="left:369px;top:415px;letter-spacing:0.015px;">Схема нумерации внутр. линий 10</span>
<span id="t95" class="t" style="left:757.71px;top:415px;">XX</span>
<div style="left:365px;top:452px;width:490px;height:1px;background:#c0c0c0"></div>
<span id="t96" class="t" style="left:309.3px;top:436px;">11</span>
<span id="t97" class="t" style="left:369px;top:435px;letter-spacing:0.048px;">Схема нумерации внутр. линий 11</span>
<span id="t98" class="t" style="left:757.71px;top:435px;">XX</span>
<div style="left:277px;top:434px;width:27px;height:18px;background:#e6e6e6;border:1px solid #c8c8c8"></div>
<svg style="left:282px;top:435px" width="16" height="16" viewBox="0 0 16 16"><path d="M5.2 0.4 L7.8 2.2 L12.4 2.2 L15.4 5.1 L15.4 15.4 L13.8 14.8 L13.2 8.6 L5.2 3.9 Z" fill="#ffaa55" stroke="#000" stroke-width="0.9" stroke-linejoin="round"/><path d="M6 1.8 L8 3.4 L11.8 3.4 L14 5.6 L14 9 L12 6.4 L6.4 3.4 Z" fill="#ffc890"/><path d="M0.5 3.4 L5.2 3.9 L13.2 9.1 L13.8 14.8 L2.3 9.1 Z" fill="#a9a9a9" stroke="#000" stroke-width="1.3" stroke-linejoin="round"/><path d="M2.4 5 L6 5.4 L11 9 L8 9.6 Z" fill="#c4c4c4"/><path d="M9.4 10.4 L12.8 9.6 L13.2 14 Z" fill="#fff"/></svg>
<div style="left:365px;top:472px;width:490px;height:1px;background:#c0c0c0"></div>
<span id="t99" class="t" style="left:309.3px;top:456px;">12</span>
<span id="t100" class="t" style="left:369px;top:455px;letter-spacing:0.018px;">Схема нумерации внутр. линий 12</span>
<span id="t101" class="t" style="left:757.71px;top:455px;">XX</span>
<div style="left:365px;top:492px;width:490px;height:1px;background:#c0c0c0"></div>
<span id="t102" class="t" style="left:309.3px;top:476px;">13</span>
<span id="t103" class="t" style="left:369px;top:475px;letter-spacing:0.015px;">Схема нумерации внутр. линий 13</span>
<span id="t104" class="t" style="left:757.71px;top:475px;">XX</span>
<div style="left:365px;top:512px;width:490px;height:1px;background:#c0c0c0"></div>
<span id="t105" class="t" style="left:309.3px;top:496px;">14</span>
<span id="t106" class="t" style="left:369px;top:495px;letter-spacing:0.011px;">Схема нумерации внутр. линий 14</span>
<span id="t107" class="t" style="left:757.71px;top:495px;">XX</span>
<div style="left:365px;top:532px;width:490px;height:1px;background:#c0c0c0"></div>
<span id="t108" class="t" style="left:309.3px;top:516px;">15</span>
<span id="t109" class="t" style="left:369px;top:515px;letter-spacing:0.015px;">Схема нумерации внутр. линий 15</span>
<span id="t110" class="t" style="left:757.71px;top:515px;">XX</span>
<div style="left:365px;top:552px;width:490px;height:1px;background:#c0c0c0"></div>
<span id="t111" class="t" style="left:309.3px;top:536px;">16</span>
<span id="t112" class="t" style="left:369px;top:535px;letter-spacing:0.015px;">Схема нумерации внутр. линий 16</span>
<span id="t113" class="t" style="left:757.71px;top:535px;">XX</span>
<div style="left:365px;top:572px;width:490px;height:1px;background:#c0c0c0"></div>
<span id="t114" class="t" style="left:309.3px;top:556px;">17</span>
<span id="t115" class="t" style="left:369px;top:555px;letter-spacing:0.015px;">Схема нумерации внутр. линий 17</span>
<span id="t116" class="t" style="left:757.71px;top:555px;">XX</span>
<div style="left:365px;top:592px;width:490px;height:1px;background:#c0c0c0"></div>
<span id="t117" class="t" style="left:309.3px;top:576px;">18</span>
<span id="t118" class="t" style="left:369px;top:575px;letter-spacing:0.015px;">Схема нумерации внутр. линий 18</span>
<span id="t119" class="t" style="left:757.71px;top:575px;">XX</span>
<div style="left:365px;top:612px;width:490px;height:1px;background:#c0c0c0"></div>
<span id="t120" class="t" style="left:309.3px;top:596px;">19</span>
<span id="t121" class="t" style="left:369px;top:595px;letter-spacing:0.015px;">Схема нумерации внутр. линий 19</span>
<span id="t122" class="t" style="left:757.71px;top:595px;">XX</span>
<div style="left:365px;top:632px;width:490px;height:1px;background:#c0c0c0"></div>
<span id="t123" class="t" style="left:310.12px;top:616px;">20</span>
<span id="t124" class="t" style="left:369px;top:615px;letter-spacing:0.015px;">Схема нумерации внутр. линий 20</span>
<span id="t125" class="t" style="left:757.71px;top:615px;">XX</span>
<div style="left:365px;top:652px;width:490px;height:1px;background:#c0c0c0"></div>
<span id="t126" class="t" style="left:310.12px;top:636px;">21</span>
<span id="t127" class="t" style="left:369px;top:635px;letter-spacing:0.018px;">Схема нумерации внутр. линий 21</span>
<span id="t128" class="t" style="left:633.48px;top:635px;">5</span>
<span id="t129" class="t" style="left:757.71px;top:635px;">XX</span>
<div style="left:277px;top:634px;width:27px;height:18px;background:#e6e6e6;border:1px solid #c8c8c8"></div>
<svg style="left:282px;top:635px" width="16" height="16" viewBox="0 0 16 16"><path d="M5.2 0.4 L7.8 2.2 L12.4 2.2 L15.4 5.1 L15.4 15.4 L13.8 14.8 L13.2 8.6 L5.2 3.9 Z" fill="#ffaa55" stroke="#000" stroke-width="0.9" stroke-linejoin="round"/><path d="M6 1.8 L8 3.4 L11.8 3.4 L14 5.6 L14 9 L12 6.4 L6.4 3.4 Z" fill="#ffc890"/><path d="M0.5 3.4 L5.2 3.9 L13.2 9.1 L13.8 14.8 L2.3 9.1 Z" fill="#a9a9a9" stroke="#000" stroke-width="1.3" stroke-linejoin="round"/><path d="M2.4 5 L6 5.4 L11 9 L8 9.6 Z" fill="#c4c4c4"/><path d="M9.4 10.4 L12.8 9.6 L13.2 14 Z" fill="#fff"/></svg>
<div style="left:365px;top:672px;width:490px;height:1px;background:#c0c0c0"></div>
<span id="t130" class="t" style="left:310.12px;top:656px;">22</span>
<span id="t131" class="t" style="left:369px;top:655px;letter-spacing:0.018px;">Схема нумерации внутр. линий 22</span>
<span id="t132" class="t" style="left:634.21px;top:655px;">6</span>
<span id="t133" class="t" style="left:757.71px;top:655px;">XX</span>
<div style="left:365px;top:692px;width:490px;height:1px;background:#c0c0c0"></div>
<span id="t134" class="t" style="left:310.12px;top:676px;">23</span>
<span id="t135" class="t" style="left:369px;top:675px;letter-spacing:0.015px;">Схема нумерации внутр. линий 23</span>
<span id="t136" class="t" style="left:757.71px;top:675px;">XX</span>
<div style="left:365px;top:712px;width:490px;height:1px;background:#c0c0c0"></div>
<span id="t137" class="t" style="left:310.12px;top:696px;">24</span>
<span id="t138" class="t" style="left:369px;top:695px;letter-spacing:0.011px;">Схема нумерации внутр. линий 24</span>
<span id="t139" class="t" style="left:757.71px;top:695px;">XX</span>
<div style="left:365px;top:732px;width:490px;height:1px;background:#c0c0c0"></div>
<span id="t140" class="t" style="left:310.12px;top:716px;">25</span>
<span id="t141" class="t" style="left:369px;top:715px;letter-spacing:0.015px;">Схема нумерации внутр. линий 25</span>
<span id="t142" class="t" style="left:757.71px;top:715px;">XX</span>
<span id="t143" class="t" style="left:310.12px;top:736px;">26</span>
<span id="t144" class="t" style="left:369px;top:735px;letter-spacing:0.015px;">Схема нумерации внутр. линий 26</span>
<span id="t145" class="t" style="left:757.71px;top:735px;">XX</span>
<div style="left:276px;top:432px;width:29px;height:1px;background:#a0a0a0"></div>
<div style="left:276px;top:632px;width:29px;height:1px;background:#a0a0a0"></div>
<div style="left:631px;top:233px;width:123px;height:19px;border:2px solid #000"></div>
<div style="left:1178px;top:195px;width:1px;height:557px;background:#fff"></div>
<div style="left:1179px;top:195px;width:15px;height:557px;background:#fff"></div>
<div style="left:1179px;top:196px;width:14px;height:555px;background:#f0f0f0"></div>
<div style="left:1179px;top:211px;width:14px;height:212px;background:#cdcdcd"></div>
<div style="left:1182px;top:312px;width:9px;height:10px;background:#f0f0f0"></div>
<svg style="left:1182px;top:200px" width="7" height="6" viewBox="0 0 7 6"><path d="M0.8 5.1 L3.5 1.7 L6.2 5.1" stroke="#505050" stroke-width="2" fill="none"/></svg>
<svg style="left:1182px;top:741px" width="7" height="6" viewBox="0 0 7 6"><path d="M0.8 0.9 L3.5 4.3 L6.2 0.9" stroke="#505050" stroke-width="2" fill="none"/></svg>
<div style="left:1px;top:780px;width:1230px;height:20px;background:#f0f0f0"></div>
<div style="left:1px;top:799px;width:1230px;height:1px;background:#fff"></div>
<div style="left:1230px;top:81px;width:1px;height:719px;background:#fff"></div>
<div style="left:241px;top:782px;width:1px;height:16px;background:#d7d7d7"></div>
<div style="left:483px;top:782px;width:1px;height:16px;background:#d7d7d7"></div>
<div style="left:724px;top:782px;width:1px;height:16px;background:#d7d7d7"></div>
<div style="left:966px;top:782px;width:1px;height:16px;background:#d7d7d7"></div>
<div style="left:1207px;top:782px;width:1px;height:16px;background:#d7d7d7"></div>
<span id="t146" class="t" style="left:3.62px;top:783px;letter-spacing:-0.048px;">Interactive Mode : default (LAN)</span>
<span id="t147" class="t" style="left:244.68px;top:783px;letter-spacing:-0.303px;">Type : TDE600</span>
<span id="t148" class="t" style="left:486.68px;top:783px;letter-spacing:-0.082px;">Level : Installer</span>
<span id="t149" class="t" style="left:727.6px;top:783px;">Версия007-000</span>
<span id="t150" class="t" style="left:969.6px;top:783px;letter-spacing:-0.264px;">Регион011-011</span>
<div style="left:1220px;top:796px;width:2px;height:2px;background:#bfbfbf"></div>
<div style="left:1223px;top:793px;width:2px;height:2px;background:#bfbfbf"></div>
<div style="left:1223px;top:796px;width:2px;height:2px;background:#bfbfbf"></div>
<div style="left:1226px;top:790px;width:2px;height:2px;background:#bfbfbf"></div>
<div style="left:1226px;top:793px;width:2px;height:2px;background:#bfbfbf"></div>
<div style="left:1226px;top:796px;width:2px;height:2px;background:#bfbfbf"></div>
<div style="left:0px;top:0px;width:1233px;height:1px;background:#dde0dd"></div>
<div style="left:1232px;top:0px;width:1px;height:802px;background:#cbcfcb"></div>
<div style="left:0px;top:801px;width:1233px;height:1px;background:#c9cdc9"></div>
</body></html>
